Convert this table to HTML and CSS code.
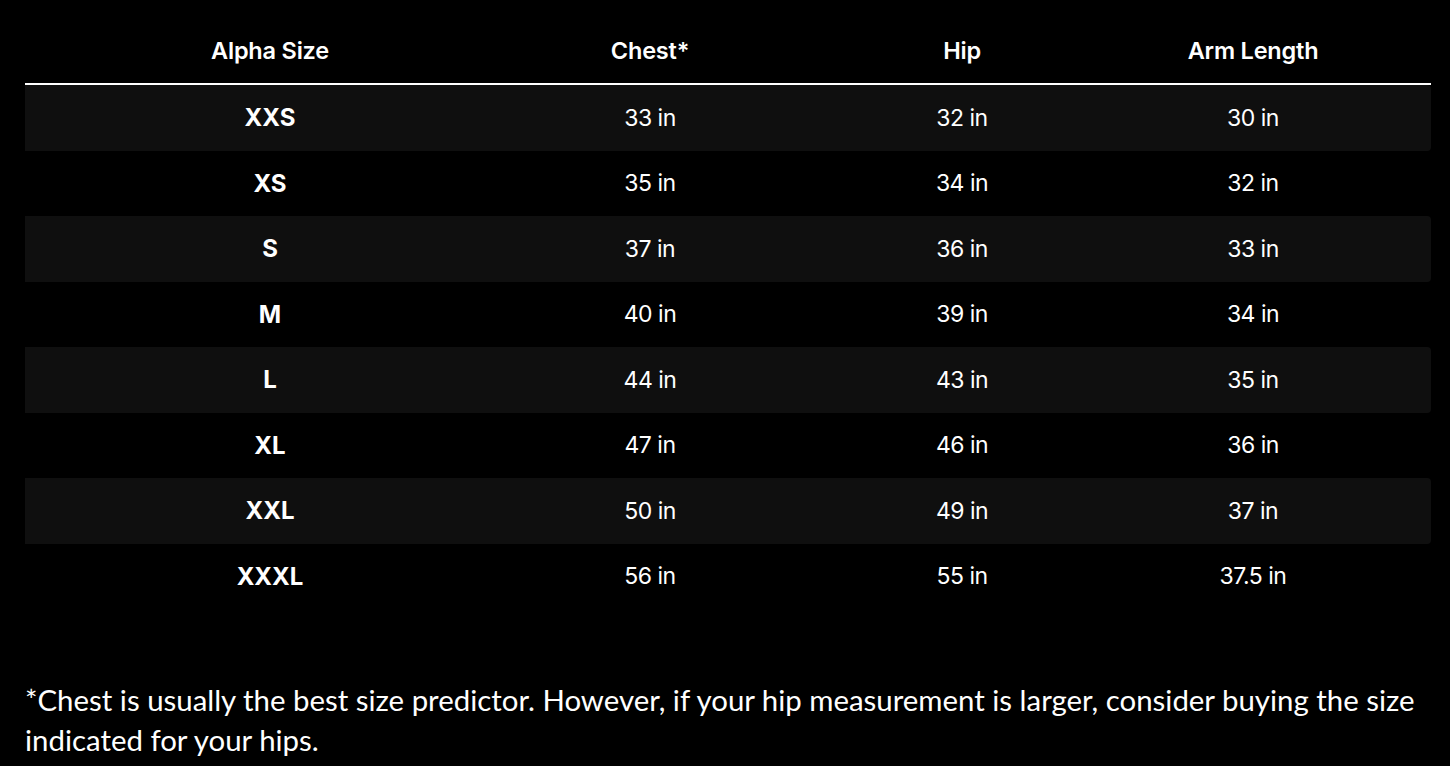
FILE: index.html
```
<!DOCTYPE html>
<html>
<head>
<meta charset="utf-8">
<link rel="stylesheet" href="styles.css">
</head>
<body>
<div class="wrap">
  <div class="table">
    <div class="row head">
      <div class="c">Alpha Size</div><div class="c">Chest*</div><div class="c">Hip</div><div class="c">Arm Length</div><div></div>
    </div>
    <div class="row alt"><div class="c b">XXS</div><div class="c">33 in</div><div class="c">32 in</div><div class="c">30 in</div><div></div></div>
    <div class="row"><div class="c b">XS</div><div class="c">35 in</div><div class="c">34 in</div><div class="c">32 in</div><div></div></div>
    <div class="row alt"><div class="c b">S</div><div class="c">37 in</div><div class="c">36 in</div><div class="c">33 in</div><div></div></div>
    <div class="row"><div class="c b">M</div><div class="c">40 in</div><div class="c">39 in</div><div class="c">34 in</div><div></div></div>
    <div class="row alt"><div class="c b">L</div><div class="c">44 in</div><div class="c">43 in</div><div class="c">35 in</div><div></div></div>
    <div class="row"><div class="c b">XL</div><div class="c">47 in</div><div class="c">46 in</div><div class="c">36 in</div><div></div></div>
    <div class="row alt"><div class="c b">XXL</div><div class="c">50 in</div><div class="c">49 in</div><div class="c">37 in</div><div></div></div>
    <div class="row"><div class="c b">XXXL</div><div class="c">56 in</div><div class="c">55 in</div><div class="c">37.5 in</div><div></div></div>
  </div>
  <p class="note">*Chest is usually the best size predictor. However, if your hip measurement is larger, consider buying the size indicated for your hips.</p>
</div>
</body>
</html>
```
FILE: styles.css
```
html, body {
  margin: 0;
  padding: 0;
  background: #000;
  color: #fff;
}
.wrap {
  padding: 17px 19px 0 25px;
}
.table {
  display: flex;
  flex-direction: column;
  font-family: Inter, "Liberation Sans", sans-serif;
  font-size: 23px;
  letter-spacing: -0.5px;
}
.row {
  display: grid;
  grid-template-columns: 490px 270px 354px 228px 1fr;
  height: 65.5px;
  align-items: center;
}
.row.head {
  height: 66px;
  border-bottom: 2px solid #fff;
  font-weight: 600;
  font-size: 23.5px;
  letter-spacing: -0.2px;
}
.row.alt {
  background: #0f0f0f;
  border-radius: 0 4px 4px 0;
}
.c {
  text-align: center;
}
.b {
  font-weight: 700;
  font-size: 24px;
  letter-spacing: 0;
}
.note {
  margin: 71px 0 0 0;
  font-family: Lato, "Open Sans", sans-serif;
  font-size: 29.4px;
  line-height: 40px;
  letter-spacing: 0;
}
```
